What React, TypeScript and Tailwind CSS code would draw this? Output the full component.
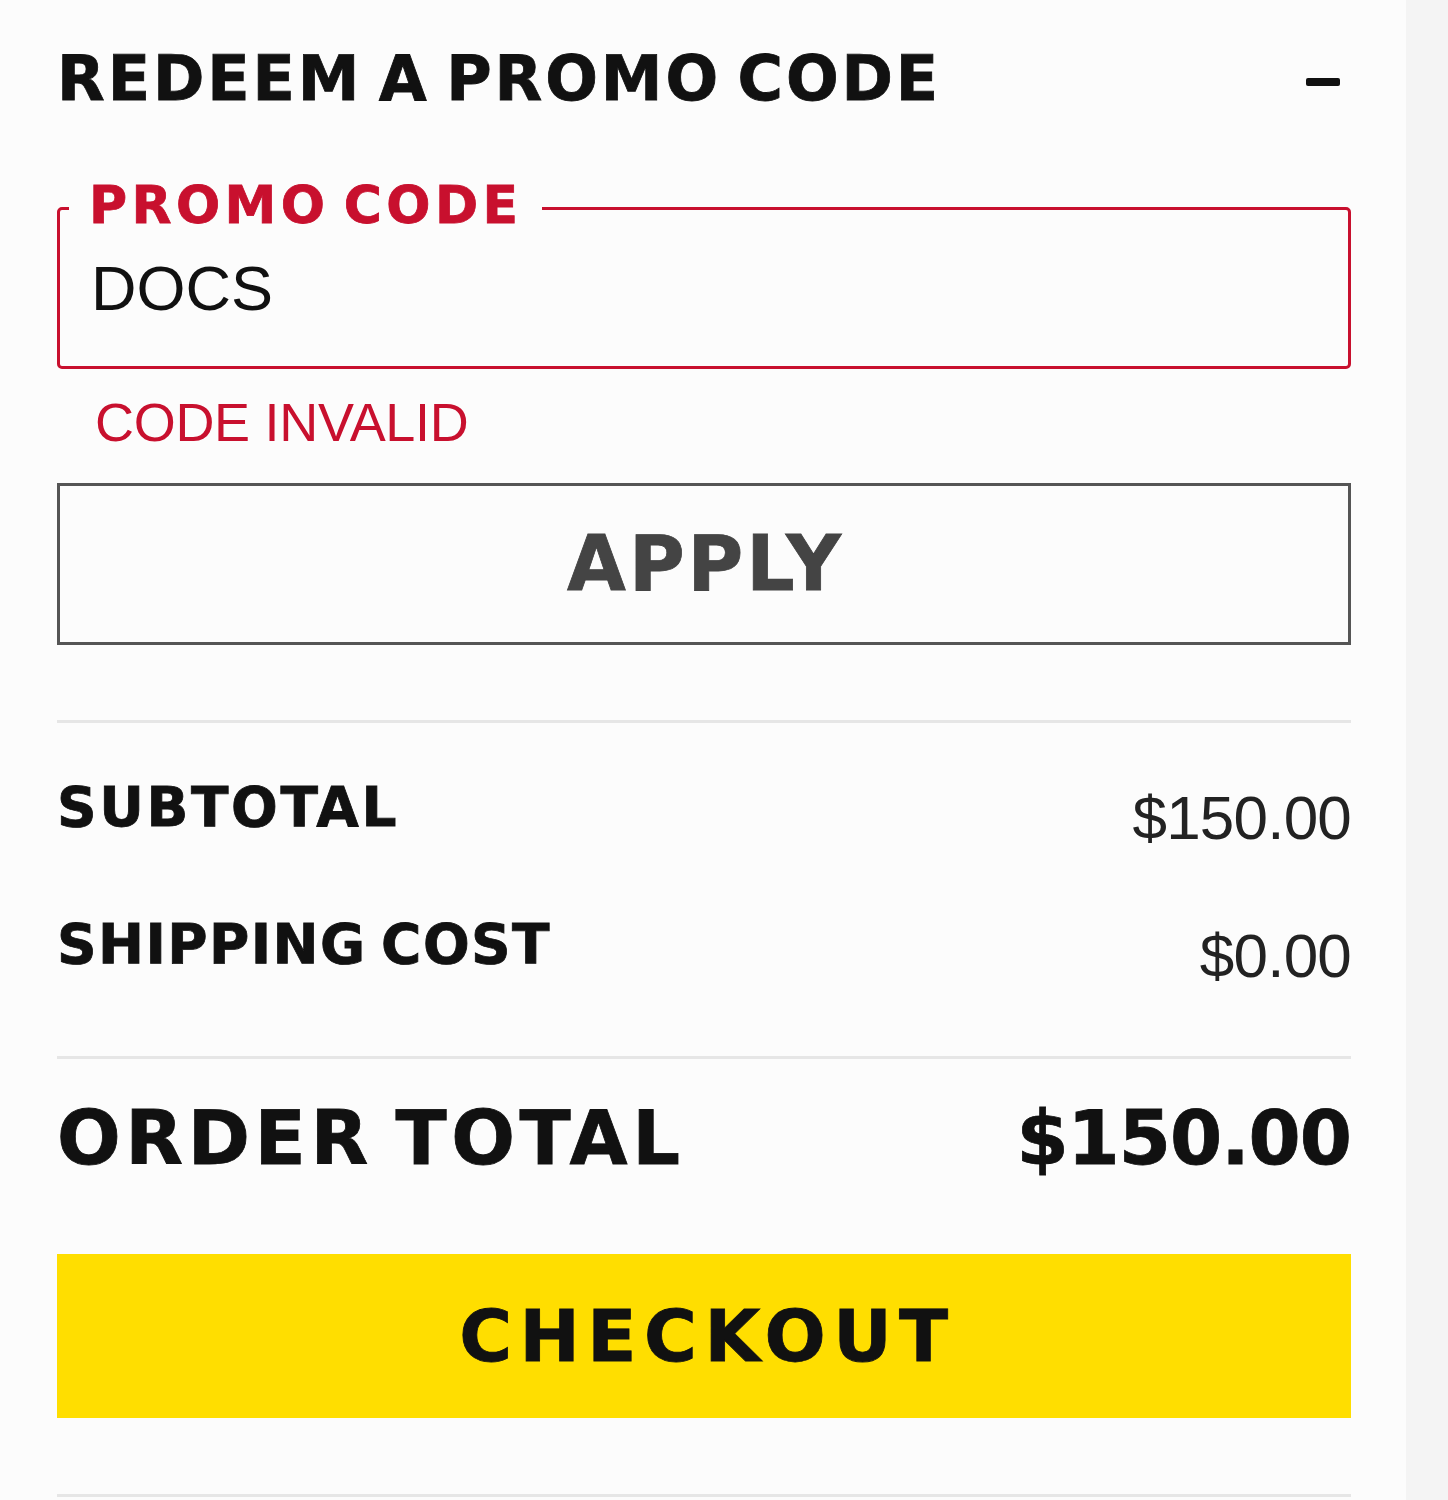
import React from 'react';

const bold = "font-['DejaVu_Sans',sans-serif] font-bold uppercase [-webkit-text-stroke:0.8px_currentColor]";
const regular = "font-['Liberation_Sans',Arial,sans-serif]";

function SummaryRow({ label, value, top, valueOffset, tracking }: { label: string; value: string; top: string; valueOffset: string; tracking: string }) {
  return (
    <div className={`flex items-start justify-between ${top}`}>
      <span className={`${bold} ${tracking} text-[55px] leading-[55px] [word-spacing:-6px] text-[#111]`}>{label}</span>
      <span className={`${regular} ${valueOffset} text-[62px] leading-[62px] tracking-[-0.8px] text-[#222]`}>{value}</span>
    </div>
  );
}

export default function App() {
  return (
    <div className="flex min-h-[1500px] w-[1448px] bg-[#fcfcfc]">
      <div className="w-[1406px] pl-[57px] pr-[55px]">
        {/* accordion header */}
        <div className="flex items-start justify-between pt-[48px]">
          <h2 className={`${bold} text-[62px] leading-[62px] tracking-[2.9px] [word-spacing:-8px] text-[#111]`}>Redeem a promo code</h2>
          <div className="mr-[11px] mt-[30px] h-[8px] w-[34px] rounded-[2px] bg-[#111]" />
        </div>

        {/* promo input */}
        <div className="relative mt-[97px] flex h-[162px] items-center rounded-[5px] border-[3px] border-[#c8102e] pl-[31px]">
          <span className={`${bold} absolute left-[9px] top-[-31px] bg-[#fcfcfc] px-[20px] text-[52px] leading-[52px] tracking-[4.4px] [word-spacing:-8px] text-[#c8102e]`}>
            Promo code
          </span>
          <span className={`${regular} text-[63px] leading-[63px] text-[#111]`}>DOCS</span>
        </div>
        <div className={`${regular} mt-[26px] pl-[38px] text-[54px] leading-[54px] tracking-[-0.3px] text-[#c8102e]`}>CODE INVALID</div>

        <button className="mt-[34px] flex h-[162px] w-full items-center justify-center border-[3px] border-[#555]">
          <span className={`${bold} pl-[3px] text-[76px] leading-[76px] tracking-[3px] text-[#444]`}>Apply</span>
        </button>

        <div className="mt-[75px] h-[3px] bg-[#e6e6e6]" />

        <SummaryRow label="Subtotal" value="$150.00" top="mt-[57px]" valueOffset="mt-[7px]" tracking="tracking-[2.6px]" />
        <SummaryRow label="Shipping cost" value="$0.00" top="mt-[68px]" valueOffset="mt-[8px]" tracking="tracking-[1.4px]" />

        <div className="mt-[69px] h-[3px] bg-[#e6e6e6]" />

        <div className="mt-[42px] flex items-start justify-between">
          <span className={`${bold} text-[75px] leading-[75px] tracking-[4.6px] [word-spacing:-8px] text-[#111]`}>Order total</span>
          <span className={`${bold} text-[75px] leading-[75px] tracking-[-1px] text-[#111]`}>$150.00</span>
        </div>

        <button className="mt-[78px] flex h-[164px] w-full items-center justify-center bg-[#ffde00]">
          <span className={`${bold} pl-[7px] text-[72px] leading-[72px] tracking-[7.5px] text-[#111]`}>Checkout</span>
        </button>

        <div className="mt-[76px] h-[3px] bg-[#e6e6e6]" />
      </div>
      <div className="flex-1 bg-[#f4f4f4]" />
    </div>
  );
}
